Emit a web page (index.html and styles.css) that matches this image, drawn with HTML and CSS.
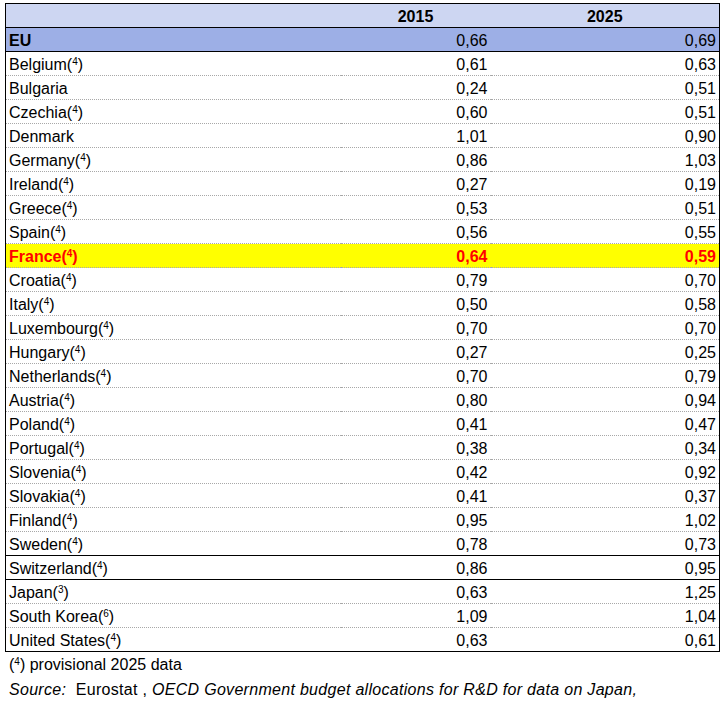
FILE: index.html
```html
<!DOCTYPE html>
<html>
<head>
<meta charset="utf-8">
<link rel="stylesheet" href="styles.css">
</head>
<body>
<table class="data">
<colgroup><col class="c1"><col class="c2"><col class="c3"></colgroup>
<thead>
<tr class="head"><th></th><th>2015</th><th>2025</th></tr>
</thead>
<tbody>
<tr class="eu"><td>EU</td><td>0,66</td><td>0,69</td></tr>
<tr><td>Belgium(<sup>4</sup>)</td><td>0,61</td><td>0,63</td></tr>
<tr><td>Bulgaria</td><td>0,24</td><td>0,51</td></tr>
<tr><td>Czechia(<sup>4</sup>)</td><td>0,60</td><td>0,51</td></tr>
<tr><td>Denmark</td><td>1,01</td><td>0,90</td></tr>
<tr><td>Germany(<sup>4</sup>)</td><td>0,86</td><td>1,03</td></tr>
<tr><td>Ireland(<sup>4</sup>)</td><td>0,27</td><td>0,19</td></tr>
<tr><td>Greece(<sup>4</sup>)</td><td>0,53</td><td>0,51</td></tr>
<tr><td>Spain(<sup>4</sup>)</td><td>0,56</td><td>0,55</td></tr>
<tr class="fr"><td>France(<sup>4</sup>)</td><td>0,64</td><td>0,59</td></tr>
<tr><td>Croatia(<sup>4</sup>)</td><td>0,79</td><td>0,70</td></tr>
<tr><td>Italy(<sup>4</sup>)</td><td>0,50</td><td>0,58</td></tr>
<tr><td>Luxembourg(<sup>4</sup>)</td><td>0,70</td><td>0,70</td></tr>
<tr><td>Hungary(<sup>4</sup>)</td><td>0,27</td><td>0,25</td></tr>
<tr><td>Netherlands(<sup>4</sup>)</td><td>0,70</td><td>0,79</td></tr>
<tr><td>Austria(<sup>4</sup>)</td><td>0,80</td><td>0,94</td></tr>
<tr><td>Poland(<sup>4</sup>)</td><td>0,41</td><td>0,47</td></tr>
<tr><td>Portugal(<sup>4</sup>)</td><td>0,38</td><td>0,34</td></tr>
<tr><td>Slovenia(<sup>4</sup>)</td><td>0,42</td><td>0,92</td></tr>
<tr><td>Slovakia(<sup>4</sup>)</td><td>0,41</td><td>0,37</td></tr>
<tr><td>Finland(<sup>4</sup>)</td><td>0,95</td><td>1,02</td></tr>
<tr class="solid"><td>Sweden(<sup>4</sup>)</td><td>0,78</td><td>0,73</td></tr>
<tr class="solid"><td>Switzerland(<sup>4</sup>)</td><td>0,86</td><td>0,95</td></tr>
<tr><td>Japan(<sup>3</sup>)</td><td>0,63</td><td>1,25</td></tr>
<tr><td>South Korea(<sup>6</sup>)</td><td>1,09</td><td>1,04</td></tr>
<tr class="last"><td>United States(<sup>4</sup>)</td><td>0,63</td><td>0,61</td></tr>
</tbody>
</table>
<div class="notes">
<p>(<sup>4</sup>) provisional 2025 data</p>
<p class="src"><em>Source:</em>&nbsp; Eurostat , <em>OECD Government budget allocations for R&amp;D for data on Japan,</em></p>
</div>
</body>
</html>
```

FILE: styles.css
```css
html, body {
  margin: 0;
  padding: 0;
  background: #ffffff;
}
body {
  font-family: "Liberation Sans", Arial, sans-serif;
  font-size: 16px;
  color: #000000;
  padding: 3px 0 0 5px;
}
.data {
  border-collapse: collapse;
  width: 714px;
  table-layout: fixed;
  border: 1px solid #000;
}
.c1 { width: 335px; }
.c2 { width: 150px; }
.c3 { width: 229px; }
.data th, .data td {
  height: 21px;
  padding: 2px 3px 0 3px;
  line-height: 21px;
  white-space: nowrap;
  border-bottom: 1px dotted #a8a8a8;
}
.data td + td { text-align: right; }
.data th {
  background: #cdd6f2;
  font-weight: bold;
  text-align: center;
  border-bottom: 1px solid #000;
}
.eu td {
  background: #9dafe6;
  border-bottom: 1px solid #000;
}
.eu td:first-child { font-weight: bold; }
.fr td {
  background: #ffff00;
  color: #ff0000;
  font-weight: bold;
}
.data .solid td { border-bottom: 1px solid #000; }
.data .last td { border-bottom: 1px solid #000; }
sup {
  font-size: 10px;
  line-height: 0;
  vertical-align: 5px;
}
.notes {
  padding-left: 4px;
}
.notes p {
  margin: 0;
  line-height: 25px;
}
.notes .src {
  letter-spacing: 0.3px;
}
```
